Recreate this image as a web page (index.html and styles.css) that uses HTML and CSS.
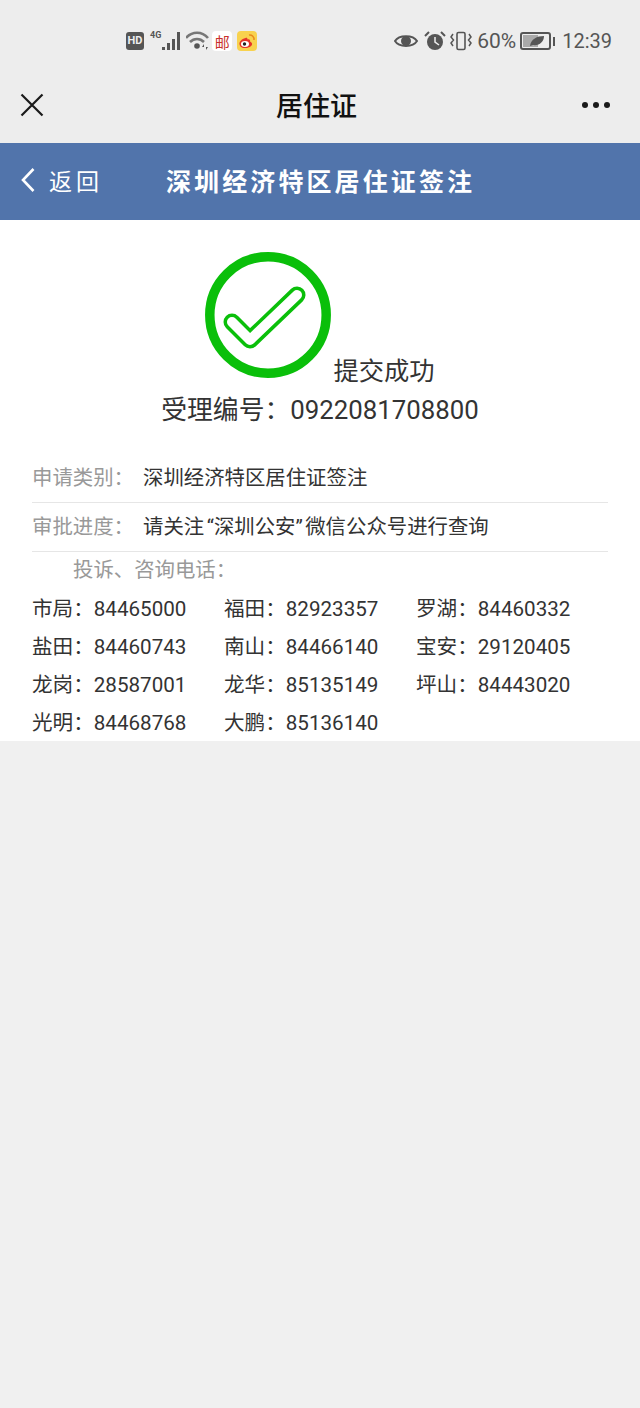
FILE: index.html
```html
<!DOCTYPE html>
<html lang="zh-CN">
<head>
    <meta charset="UTF-8">
    <meta name="viewport" content="width=device-width, initial-scale=1.0">
    <title>居住证</title>
    <link rel="stylesheet" href="styles.css">
</head>
<body>
    <div class="status-bar">
        <div class="status-left">
            <span class="hd-badge">HD</span>
            <div class="signal">
                <span class="signal-type">4G</span>
                <svg width="19" height="20" viewBox="0 0 19 20">
                    <g fill="#555">
                        <rect x="0" y="16" width="3" height="3"/>
                        <rect x="5" y="12" width="3" height="7"/>
                        <rect x="10" y="8" width="3" height="11"/>
                        <rect x="15" y="1" width="3" height="18"/>
                    </g>
                </svg>
            </div>
            <svg class="wifi" width="24" height="20" viewBox="0 0 24 20">
                <g fill="none" stroke="#777" stroke-width="2.6">
                    <path d="M0 7 C6 0 16 0 22 7"/>
                    <path d="M4 11 C8 7 14 7 18 11"/>
                </g>
                <circle cx="11" cy="15" r="2.800" fill="#555"/>
                <path d="M18 13 L16 16 H18 Z M20 19 L22 16 H20 Z" fill="#555"/>
            </svg>
            <span class="app-icon app-mail">邮</span>
            <span class="app-icon app-weibo">
                <svg width="18" height="16" viewBox="0 0 18 16">
                    <path d="M7.5 5 C3.5 6 1 9 1.5 11.5 C2 14.5 5.5 15.5 8.5 15 C12 14.5 14.5 12.5 14 10.5 C13.7 9.3 12.5 9 12 8.5 C12.5 7 11.500 5.800 9.500 6.500 C9.500 5 9 4.500 7.500 5 Z" fill="#e6352b"/>
                    <ellipse cx="7" cy="11" rx="4" ry="3" fill="#fff"/>
                    <circle cx="6.500" cy="11" r="1.700" fill="#222"/>
                    <path d="M11 2 C14 1.500 16.500 4 16 7" fill="none" stroke="#e98a1c" stroke-width="1.500"/>
                </svg>
            </span>
        </div>
        <div class="status-right">
            <svg width="24" height="16" viewBox="0 0 24 16">
                <path d="M1 8 C5 1.500 19 1.500 23 8 C19 14.500 5 14.500 1 8 Z" fill="none" stroke="#555" stroke-width="2"/>
                <circle cx="12" cy="8" r="5" fill="#555"/>
            </svg>
            <svg class="alarm" width="22" height="22" viewBox="0 0 22 22">
                <circle cx="11" cy="12" r="8" fill="#555"/>
                <path d="M11 7 V12 L15 15" fill="none" stroke="#eee" stroke-width="1.500"/>
                <path d="M1 6 L5 2 M21 6 L17 2" stroke="#555" stroke-width="2"/>
            </svg>
            <svg class="vibrate" width="22" height="20" viewBox="0 0 22 20">
                <rect x="7" y="1.500" width="8" height="17" rx="1.500" fill="none" stroke="#555" stroke-width="1.600"/>
                <path d="M3 3 L1 6 L3.500 9 L1 12 L3 15 M19 3 L21 6 L18.500 9 L21 12 L19 15" fill="none" stroke="#555" stroke-width="1.500"/>
            </svg>
            <span class="battery-text">60%</span>
            <div class="battery">
                <div class="battery-body">
                    <div class="battery-fill"></div>
                    <svg class="leaf" width="16" height="12" viewBox="0 0 16 12">
                        <path d="M1 11 C2 4 8 1 15 1 C15 7 10 11 4 10 Z" fill="#555"/>
                    </svg>
                </div>
                <div class="battery-cap"></div>
            </div>
            <span class="clock">12:39</span>
        </div>
    </div>

    <div class="nav-bar">
        <svg width="24" height="24" viewBox="0 0 24 24">
            <path d="M1.500 1.500 L22.500 22.500 M22.500 1.500 L1.500 22.500" stroke="#1a1a1a" stroke-width="2.200"/>
        </svg>
        <h1>居住证</h1>
        <div class="more-dots"><i></i><i></i><i></i></div>
    </div>

    <header class="page-header">
        <a class="back-link">
            <svg width="16" height="26" viewBox="0 0 16 26">
                <path d="M13.500 2 L3 13 L13.500 24" fill="none" stroke="#fff" stroke-width="2.600"/>
            </svg>
            <span>返回</span>
        </a>
        <div class="page-title">深圳经济特区居住证签注</div>
    </header>

    <main class="content">
        <div class="result">
            <p class="result-status"><svg class="check-icon" width="126" height="126" viewBox="0 0 126 126">
                <circle cx="63" cy="63" r="58.200" fill="none" stroke="#0abf0a" stroke-width="9.500"/>
                <path d="M27 70 L45 88 L92 43" fill="none" stroke="#0abf0a" stroke-width="17" stroke-linecap="round" stroke-linejoin="round"/>
                <path d="M27 70 L45 88 L92 43" fill="none" stroke="#fff" stroke-width="10" stroke-linecap="round" stroke-linejoin="round"/>
            </svg>提交成功</p>
            <p class="result-number">受理编号：0922081708800</p>
        </div>

        <div class="info-row">
            <span class="info-label">申请类别：</span>
            <span class="info-value">深圳经济特区居住证签注</span>
        </div>
        <div class="info-row">
            <span class="info-label">审批进度：</span>
            <span class="info-value">请关注<span class="info-quote">“深圳公安”</span>微信公众号进行查询</span>
        </div>

        <div class="phone-title">投诉、咨询电话：</div>
        <div class="phone-list">
            <div>市局：<span>84465000</span></div>
            <div>福田：<span>82923357</span></div>
            <div>罗湖：<span>84460332</span></div>
            <div>盐田：<span>84460743</span></div>
            <div>南山：<span>84466140</span></div>
            <div>宝安：<span>29120405</span></div>
            <div>龙岗：<span>28587001</span></div>
            <div>龙华：<span>85135149</span></div>
            <div>坪山：<span>84443020</span></div>
            <div>光明：<span>84468768</span></div>
            <div>大鹏：<span>85136140</span></div>
        </div>
    </main>
</body>
</html>
```

FILE: styles.css
```css
* {
    margin: 0;
    padding: 0;
    box-sizing: border-box;
}

body {
    background: #f0f0f0;
    font-family: Roboto, "Noto Sans CJK SC", sans-serif;
    min-height: 100vh;
}

/* phone status bar */
.status-bar {
    height: 72px;
    background: #ededed;
    display: flex;
    align-items: center;
    justify-content: space-between;
    padding: 10px 28px 0 126px;
    color: #555;
}

.status-left,
.status-right {
    display: flex;
    align-items: center;
}

.hd-badge {
    width: 18px;
    height: 18px;
    background: #555;
    color: #eee;
    border-radius: 3px;
    font-size: 11px;
    font-weight: 700;
    line-height: 18px;
    text-align: center;
}

.signal {
    display: flex;
    align-items: flex-end;
    margin-left: 6px;
    height: 20px;
}

.signal-type {
    font-size: 9px;
    font-weight: 700;
    align-self: flex-start;
    line-height: 9px;
}

.signal svg {
    margin-left: 1px;
}

.wifi {
    margin-left: 5px;
}

.app-icon {
    width: 20px;
    height: 20px;
    border-radius: 4px;
    display: flex;
    align-items: center;
    justify-content: center;
}

.app-mail {
    background: #fff;
    color: #c9302c;
    font-size: 15px;
    margin-left: 2px;
}

.app-weibo {
    background: #f8d24e;
    margin-left: 5px;
}

.status-right svg {
    flex: none;
}

.alarm {
    margin-left: 6px;
}

.vibrate {
    margin-left: 4px;
}

.battery-text {
    font-size: 21px;
    margin-left: 5px;
}

.battery {
    display: flex;
    align-items: center;
    margin-left: 4px;
}

.battery-body {
    width: 31px;
    height: 18px;
    border: 2px solid #555;
    border-radius: 3px;
    position: relative;
    padding: 1px;
}

.battery-fill {
    width: 60%;
    height: 100%;
    background: #aaa;
}

.leaf {
    position: absolute;
    left: 7px;
    top: 1px;
}

.battery-cap {
    width: 2px;
    height: 9px;
    background: #555;
    margin-left: 2px;
}

.clock {
    font-size: 20px;
    margin-left: 7px;
}

/* wechat title bar */
.nav-bar {
    height: 71px;
    background: #ededed;
    display: flex;
    align-items: center;
    justify-content: space-between;
    padding: 0 30px 6px 20px;
}

.nav-bar h1 {
    font-size: 27px;
    font-weight: 500;
    color: #111;
    margin-left: 7px;
}

.more-dots {
    display: flex;
    gap: 5px;
}

.more-dots i {
    width: 6px;
    height: 6px;
    border-radius: 50%;
    background: #1a1a1a;
}

.page-header {
    height: 77px;
    background: #5174ab;
    color: #fff;
    display: flex;
    align-items: center;
    padding: 0 0 3px 20px;
}

.back-link {
    display: flex;
    align-items: center;
    width: 146px;
    font-size: 23px;
    letter-spacing: 4px;
}

.back-link span {
    margin-left: 13px;
}

.page-title {
    font-size: 25px;
    font-weight: 700;
    letter-spacing: 3.100px;
}

.content {
    background: #fff;
    height: 521px;
    padding: 32px 32px 0;
    color: #333;
}

.result {
    text-align: center;
}

.result-status {
    font-size: 25.300px;
    line-height: 1;
}

.check-icon {
    vertical-align: 2px;
    margin-right: 2px;
}

.result-number {
    font-size: 25.800px;
    line-height: 44px;
    margin: 4px 0 22px;
}

.info-row {
    display: flex;
    align-items: center;
    height: 49px;
    padding-bottom: 4px;
    border-bottom: 1px solid #e6e6e6;
    font-size: 20.400px;
}

.info-label {
    width: 111px;
    color: #999;
}

.info-quote {
    padding: 0 2.500px;
}

.phone-title {
    font-size: 20.400px;
    color: #999;
    line-height: 36px;
    text-indent: 41px;
}

.phone-list {
    display: grid;
    grid-template-columns: repeat(3, 192px);
    grid-auto-rows: 38px;
    align-items: center;
    font-size: 20.600px;
}
```
